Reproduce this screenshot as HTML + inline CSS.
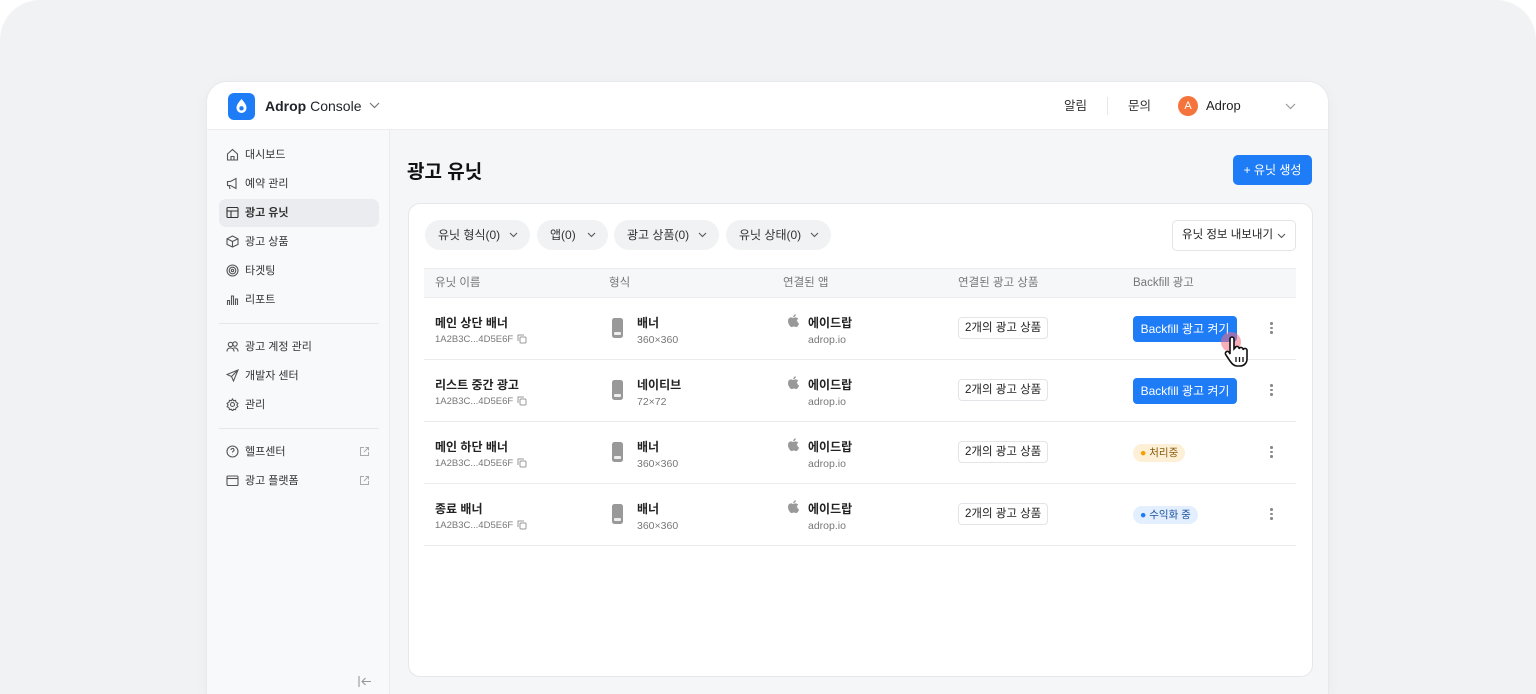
<!DOCTYPE html>
<html><head><meta charset="utf-8"><style>
*{box-sizing:border-box;margin:0;padding:0}
html,body{width:1536px;height:694px;overflow:hidden}
body{background:#fff;font-family:"Liberation Sans","Noto Sans CJK KR",sans-serif;color:#1f2329;position:relative}
.outer{position:absolute;left:0;top:0;width:1536px;height:694px;background:#f1f2f4;border-radius:40px 40px 0 0}
.win{position:absolute;left:207px;top:82px;width:1121px;height:612px;background:#f5f6f8;border-radius:20px 20px 0 0;overflow:hidden;box-shadow:0 0 0 1px #e8e9ec,0 4px 16px rgba(0,0,0,.04)}
.hdr{position:absolute;left:0;top:0;width:100%;height:48px;background:#fff;border-bottom:1px solid #ececef}
.logo{position:absolute;left:21px;top:11px;width:27px;height:27px;border-radius:6px;background:#1f7cf7}
.side{position:absolute;left:0;top:48px;width:183px;height:564px;background:#f8f9fa;border-right:1px solid #ececef}
.nav{position:absolute;left:12px;width:160px;height:28px;border-radius:7px;font-size:11px;color:#333;line-height:28px;padding-left:26px}
.nav svg{position:absolute;left:7px;top:7px}
.nav.act{background:#ebecef;font-weight:bold}
.sep{position:absolute;left:12px;width:160px;height:1px;background:#e6e7ea}
.abs{position:absolute}
.card{position:absolute;left:201px;top:121px;width:905px;height:474px;background:#fff;border:1px solid #e6e7ea;border-radius:12px}
.chip{position:absolute;top:16px;height:30px;border-radius:15px;background:#f1f2f4;font-size:12px;line-height:30px;padding-left:13px;color:#333}
.chip svg{position:absolute;right:12px;top:12px}
.th{position:absolute;top:64px;left:15px;width:872px;height:30px;background:#f6f7f8;border-top:1px solid #ececef;border-bottom:1px solid #ececef;font-size:11.5px;color:#777;line-height:28px}
.row{position:absolute;left:15px;width:872px;height:62px;border-bottom:1px solid #ececef}
.t1{font-size:12px;font-weight:bold;color:#222;position:absolute}
.t2{font-size:9.5px;color:#777;position:absolute}
.t2 svg{vertical-align:-2px;margin-left:4px}
.pill{position:absolute;left:534px;top:19px;height:22px;border:1px solid #e3e4e7;border-radius:4px;font-size:11.5px;line-height:20px;padding:0 6px;color:#222}
.btn{position:absolute;left:709px;top:18px;width:104px;height:26px;background:#1f7cf7;border-radius:4px;color:#fff;font-size:12px;line-height:26px;text-align:center}
.dots{position:absolute;left:846px;top:24px;width:3px}
.dots i{display:block;width:2.5px;height:2.5px;background:#888;border-radius:50%;margin-bottom:2px}
.phone{position:absolute;left:188px;top:20px;width:11px;height:20px;border-radius:2.5px;background:#999}
.phone:after{content:"";position:absolute;left:2px;bottom:3px;width:7px;height:3px;background:#eee;border-radius:1px}
.apple{position:absolute;left:363px;top:16px}
</style></head><body>
<div class="outer"></div>
<div class="win">
 <div class="hdr">
  <div class="logo"><svg width="27" height="27" viewBox="0 0 27 27"><path d="M13.5 6 C11 9 8.5 11.5 8.5 15 a5 5 0 0 0 10 0 C18.5 11.5 16 9 13.5 6Z" fill="#fff"/><circle cx="13.5" cy="15.3" r="2.2" fill="#1f7cf7"/></svg></div>
  <div class="abs" style="left:58px;top:16px;font-size:14px"><b>Adrop</b> Console</div>
  <svg class="abs" style="left:162px;top:20px" width="11" height="7"><path d="M1 1l4.5 4.5L10 1" stroke="#777" fill="none" stroke-width="1.2"/></svg>
  <div class="abs" style="left:857px;top:16px;font-size:12.5px;line-height:16px;color:#333">알림</div>
  <div class="abs" style="left:900px;top:15px;width:1px;height:18px;background:#e6e7ea"></div>
  <div class="abs" style="left:921px;top:16px;font-size:12.5px;line-height:16px;color:#333">문의</div>
  <div class="abs" style="left:971px;top:14px;width:20px;height:20px;border-radius:50%;background:#f4743b;color:#fff;font-size:11px;text-align:center;line-height:20px">A</div>
  <div class="abs" style="left:999px;top:16px;font-size:13px;line-height:16px;color:#222">Adrop</div>
  <svg class="abs" style="left:1078px;top:21px" width="11" height="7"><path d="M1 1l4.5 4.5L10 1" stroke="#999" fill="none" stroke-width="1.2"/></svg>
 </div>
 <div class="side">
  <div class="nav" style="top:11px"><svg width="13" height="13" viewBox="0 0 13 13" fill="none" stroke="#555" stroke-width="1.1"><path d="M1.5 6L6.5 1.5 11.5 6V12H1.5Z M5 12V8.5h3V12"/></svg>대시보드</div>
  <div class="nav" style="top:40px"><svg width="13" height="13" viewBox="0 0 13 13" fill="none" stroke="#555" stroke-width="1.1"><path d="M1.5 4.5h3L10 1.5v10L4.5 8.5h-3Z M3 8.5l1 3.5"/></svg>예약 관리</div>
  <div class="nav act" style="top:69px"><svg width="13" height="13" viewBox="0 0 13 13" fill="none" stroke="#333" stroke-width="1.1"><rect x="1" y="1.5" width="11" height="10" rx="1"/><path d="M1 5h11M5 5v6.5"/></svg>광고 유닛</div>
  <div class="nav" style="top:98px"><svg width="13" height="13" viewBox="0 0 13 13" fill="none" stroke="#555" stroke-width="1.1"><path d="M6.5 1L12 3.8v5.6L6.5 12 1 9.4V3.8Z M1 3.8l5.5 2.7L12 3.8M6.5 6.5V12"/></svg>광고 상품</div>
  <div class="nav" style="top:127px"><svg width="13" height="13" viewBox="0 0 13 13" fill="none" stroke="#555" stroke-width="1.1"><circle cx="6.5" cy="6.5" r="5.5"/><circle cx="6.5" cy="6.5" r="3.3"/><circle cx="6.5" cy="6.5" r="1.2"/></svg>타겟팅</div>
  <div class="nav" style="top:156px"><svg width="13" height="13" viewBox="0 0 13 13" fill="none" stroke="#555" stroke-width="1.1"><path d="M1.5 12V7.5h2V12M5.5 12V3h2v9M9.5 12V6h2v6"/></svg>리포트</div>
  <div class="sep" style="top:193px"></div>
  <div class="nav" style="top:203px"><svg width="13" height="13" viewBox="0 0 13 13" fill="none" stroke="#555" stroke-width="1.1"><circle cx="4.5" cy="4.5" r="2.2"/><circle cx="9" cy="4" r="2.2"/><path d="M1 11.5c0-2.5 1.5-3.5 3.5-3.5s3.5 1 3.5 3.5M7.5 8c2.5-.5 4.5.5 4.5 3.5"/></svg>광고 계정 관리</div>
  <div class="nav" style="top:232px"><svg width="13" height="13" viewBox="0 0 13 13" fill="none" stroke="#555" stroke-width="1.1"><path d="M12 1L1 5.5l4.5 2L7.5 12Z M5.5 7.5L12 1"/></svg>개발자 센터</div>
  <div class="nav" style="top:261px"><svg width="13" height="13" viewBox="0 0 13 13" fill="none" stroke="#555" stroke-width="1.1"><circle cx="6.5" cy="6.5" r="2"/><path d="M6.5 1l1 1.7 2-.3.6 1.9 1.8 1-1 1.7 1 1.7-1.8 1-.6 1.9-2-.3-1 1.7-1-1.7-2 .3-.6-1.9-1.8-1 1-1.7-1-1.7 1.8-1 .6-1.9 2 .3Z"/></svg>관리</div>
  <div class="sep" style="top:298px"></div>
  <div class="nav" style="top:308px"><svg width="13" height="13" viewBox="0 0 13 13" fill="none" stroke="#555" stroke-width="1.1"><circle cx="6.5" cy="6.5" r="5.5"/><path d="M5 5a1.5 1.5 0 1 1 2 1.4c-.5.2-.5.6-.5 1.1M6.5 9.2v.3"/></svg>헬프센터<svg style="left:140px;top:8px" width="11" height="11" viewBox="0 0 11 11" fill="none" stroke="#aaa" stroke-width="1"><path d="M5 1.5H1.5v8h8V6M6.5 1.5h3v3M9.5 1.5L5 6"/></svg></div>
  <div class="nav" style="top:337px"><svg width="13" height="13" viewBox="0 0 13 13" fill="none" stroke="#555" stroke-width="1.1"><rect x="1" y="2" width="11" height="9.5" rx="1"/><path d="M1 4.5h11"/></svg>광고 플랫폼<svg style="left:140px;top:8px" width="11" height="11" viewBox="0 0 11 11" fill="none" stroke="#aaa" stroke-width="1"><path d="M5 1.5H1.5v8h8V6M6.5 1.5h3v3M9.5 1.5L5 6"/></svg></div>
  <svg class="abs" style="left:151px;top:546px" width="14" height="11" viewBox="0 0 14 11" fill="none" stroke="#999" stroke-width="1.1"><path d="M1 0v11M13 5.5H4M7.5 2L4 5.5 7.5 9"/></svg>
 </div>
 <div class="abs" style="left:200px;top:75px;font-size:19px;font-weight:bold;color:#111">광고 유닛</div>
 <div class="abs" style="left:1026px;top:73px;width:79px;height:30px;background:#1f7cf7;border-radius:5px;color:#fff;font-size:12px;line-height:30px;text-align:center">+ 유닛 생성</div>
 <div class="card">
  <div class="chip" style="left:16px;width:105px">유닛 형식(0)<svg width="9" height="6"><path d="M1 1l3.5 3.5L8 1" stroke="#555" fill="none" stroke-width="1.1"/></svg></div>
  <div class="chip" style="left:128px;width:71px">앱(0)<svg width="9" height="6"><path d="M1 1l3.5 3.5L8 1" stroke="#555" fill="none" stroke-width="1.1"/></svg></div>
  <div class="chip" style="left:205px;width:105px">광고 상품(0)<svg width="9" height="6"><path d="M1 1l3.5 3.5L8 1" stroke="#555" fill="none" stroke-width="1.1"/></svg></div>
  <div class="chip" style="left:317px;width:105px">유닛 상태(0)<svg width="9" height="6"><path d="M1 1l3.5 3.5L8 1" stroke="#555" fill="none" stroke-width="1.1"/></svg></div>
  <div class="abs" style="left:763px;top:16px;width:124px;height:31px;border:1px solid #e3e4e7;border-radius:5px;font-size:11.5px;line-height:29px;padding-left:9px;color:#222;white-space:nowrap">유닛 정보 내보내기<svg class="abs" style="right:9px;top:12px" width="9" height="6"><path d="M1 1l3.5 3.5L8 1" stroke="#555" fill="none" stroke-width="1.1"/></svg></div>
  <div class="th"><span class="abs" style="left:11px">유닛 이름</span><span class="abs" style="left:185px">형식</span><span class="abs" style="left:359px">연결된 앱</span><span class="abs" style="left:534px">연결된 광고 상품</span><span class="abs" style="left:709px">Backfill 광고</span></div>

  <div class="row" style="top:94px">
   <div class="t1" style="left:11px;top:16px">메인 상단 배너</div><div class="t2" style="left:11px;top:36px">1A2B3C...4D5E6F<svg width="10" height="10" viewBox="0 0 10 10" fill="none" stroke="#999"><rect x="3" y="3" width="6" height="6" rx="1"/><path d="M1 7V1h6"/></svg></div>
   <div class="phone"></div><div class="t1" style="left:213px;top:16px">배너</div><div class="t2" style="left:213px;top:36px;font-size:10.5px">360×360</div>
   <svg class="apple" width="12" height="14" viewBox="0 0 12 14"><path d="M9.8 7.4c0-1.7 1.4-2.5 1.5-2.6-.8-1.2-2.1-1.3-2.5-1.4-1.1-.1-2.1.6-2.6.6s-1.4-.6-2.3-.6C2.7 3.4 1 4.4 1 7c0 1.6.6 3.2 1.4 4.3.6.9 1.3 1.8 2.2 1.8.9 0 1.2-.6 2.3-.6s1.4.6 2.3.6c.9 0 1.6-.9 2.1-1.8.6-.9.8-1.7.8-1.8-.1 0-1.6-.6-1.6-2.3ZM8.1 2.3C8.6 1.7 8.9 1 8.8.2 8.2.2 7.4.6 6.9 1.2c-.4.5-.8 1.3-.7 2 .7.1 1.4-.3 1.9-.9Z" fill="#999"/></svg>
   <div class="t1" style="left:384px;top:16px">에이드랍</div><div class="t2" style="left:384px;top:36px;font-size:10.5px">adrop.io</div>
   <div class="pill">2개의 광고 상품</div><div class="btn">Backfill 광고 켜기</div><div class="dots"><i></i><i></i><i></i></div>
   <div class="abs" style="left:797px;top:34px;width:20px;height:20px;border-radius:50%;background:rgba(240,110,130,.55)"></div>
   <svg class="abs" style="left:800px;top:38px" width="26" height="32" viewBox="0 0 26 32"><path d="M6 3a2 2 0 0 1 4 0v10l1-1a2 2 0 0 1 4 1 2 2 0 0 1 4 1 2 2 0 0 1 4 1v8c0 4-3 7-7 7h-3c-3 0-5-2-7-5L2 19a2 2 0 0 1 3-3l1 2Z" fill="#fff" stroke="#111" stroke-width="1.6"/><path d="M12 21v5M15.5 21v5M19 21v5" stroke="#111" stroke-width="1.3"/></svg>
  </div>
  <div class="row" style="top:156px">
   <div class="t1" style="left:11px;top:16px">리스트 중간 광고</div><div class="t2" style="left:11px;top:36px">1A2B3C...4D5E6F<svg width="10" height="10" viewBox="0 0 10 10" fill="none" stroke="#999"><rect x="3" y="3" width="6" height="6" rx="1"/><path d="M1 7V1h6"/></svg></div>
   <div class="phone"></div><div class="t1" style="left:213px;top:16px">네이티브</div><div class="t2" style="left:213px;top:36px;font-size:10.5px">72×72</div>
   <svg class="apple" width="12" height="14" viewBox="0 0 12 14"><path d="M9.8 7.4c0-1.7 1.4-2.5 1.5-2.6-.8-1.2-2.1-1.3-2.5-1.4-1.1-.1-2.1.6-2.6.6s-1.4-.6-2.3-.6C2.7 3.4 1 4.4 1 7c0 1.6.6 3.2 1.4 4.3.6.9 1.3 1.8 2.2 1.8.9 0 1.2-.6 2.3-.6s1.4.6 2.3.6c.9 0 1.6-.9 2.1-1.8.6-.9.8-1.7.8-1.8-.1 0-1.6-.6-1.6-2.3ZM8.1 2.3C8.6 1.7 8.9 1 8.8.2 8.2.2 7.4.6 6.9 1.2c-.4.5-.8 1.3-.7 2 .7.1 1.4-.3 1.9-.9Z" fill="#999"/></svg>
   <div class="t1" style="left:384px;top:16px">에이드랍</div><div class="t2" style="left:384px;top:36px;font-size:10.5px">adrop.io</div>
   <div class="pill">2개의 광고 상품</div><div class="btn">Backfill 광고 켜기</div><div class="dots"><i></i><i></i><i></i></div>
  </div>
  <div class="row" style="top:218px">
   <div class="t1" style="left:11px;top:16px">메인 하단 배너</div><div class="t2" style="left:11px;top:36px">1A2B3C...4D5E6F<svg width="10" height="10" viewBox="0 0 10 10" fill="none" stroke="#999"><rect x="3" y="3" width="6" height="6" rx="1"/><path d="M1 7V1h6"/></svg></div>
   <div class="phone"></div><div class="t1" style="left:213px;top:16px">배너</div><div class="t2" style="left:213px;top:36px;font-size:10.5px">360×360</div>
   <svg class="apple" width="12" height="14" viewBox="0 0 12 14"><path d="M9.8 7.4c0-1.7 1.4-2.5 1.5-2.6-.8-1.2-2.1-1.3-2.5-1.4-1.1-.1-2.1.6-2.6.6s-1.4-.6-2.3-.6C2.7 3.4 1 4.4 1 7c0 1.6.6 3.2 1.4 4.3.6.9 1.3 1.8 2.2 1.8.9 0 1.2-.6 2.3-.6s1.4.6 2.3.6c.9 0 1.6-.9 2.1-1.8.6-.9.8-1.7.8-1.8-.1 0-1.6-.6-1.6-2.3ZM8.1 2.3C8.6 1.7 8.9 1 8.8.2 8.2.2 7.4.6 6.9 1.2c-.4.5-.8 1.3-.7 2 .7.1 1.4-.3 1.9-.9Z" fill="#999"/></svg>
   <div class="t1" style="left:384px;top:16px">에이드랍</div><div class="t2" style="left:384px;top:36px;font-size:10.5px">adrop.io</div>
   <div class="pill">2개의 광고 상품</div>
   <div class="abs" style="left:709px;top:22px;height:18px;padding:0 7px;border-radius:9px;background:#fdf0d6;font-size:10.5px;line-height:18px;color:#8a5a10"><span style="color:#f5a000">●</span> 처리중</div>
   <div class="dots"><i></i><i></i><i></i></div>
  </div>
  <div class="row" style="top:280px">
   <div class="t1" style="left:11px;top:16px">종료 배너</div><div class="t2" style="left:11px;top:36px">1A2B3C...4D5E6F<svg width="10" height="10" viewBox="0 0 10 10" fill="none" stroke="#999"><rect x="3" y="3" width="6" height="6" rx="1"/><path d="M1 7V1h6"/></svg></div>
   <div class="phone"></div><div class="t1" style="left:213px;top:16px">배너</div><div class="t2" style="left:213px;top:36px;font-size:10.5px">360×360</div>
   <svg class="apple" width="12" height="14" viewBox="0 0 12 14"><path d="M9.8 7.4c0-1.7 1.4-2.5 1.5-2.6-.8-1.2-2.1-1.3-2.5-1.4-1.1-.1-2.1.6-2.6.6s-1.4-.6-2.3-.6C2.7 3.4 1 4.4 1 7c0 1.6.6 3.2 1.4 4.3.6.9 1.3 1.8 2.2 1.8.9 0 1.2-.6 2.3-.6s1.4.6 2.3.6c.9 0 1.6-.9 2.1-1.8.6-.9.8-1.7.8-1.8-.1 0-1.6-.6-1.6-2.3ZM8.1 2.3C8.6 1.7 8.9 1 8.8.2 8.2.2 7.4.6 6.9 1.2c-.4.5-.8 1.3-.7 2 .7.1 1.4-.3 1.9-.9Z" fill="#999"/></svg>
   <div class="t1" style="left:384px;top:16px">에이드랍</div><div class="t2" style="left:384px;top:36px;font-size:10.5px">adrop.io</div>
   <div class="pill">2개의 광고 상품</div>
   <div class="abs" style="left:709px;top:22px;height:18px;padding:0 7px;border-radius:9px;background:#e3efff;font-size:10.5px;line-height:18px;color:#1b4f99"><span style="color:#1f7cf7">●</span> 수익화 중</div>
   <div class="dots"><i></i><i></i><i></i></div>
  </div>
 </div>
</div>
</body></html>
